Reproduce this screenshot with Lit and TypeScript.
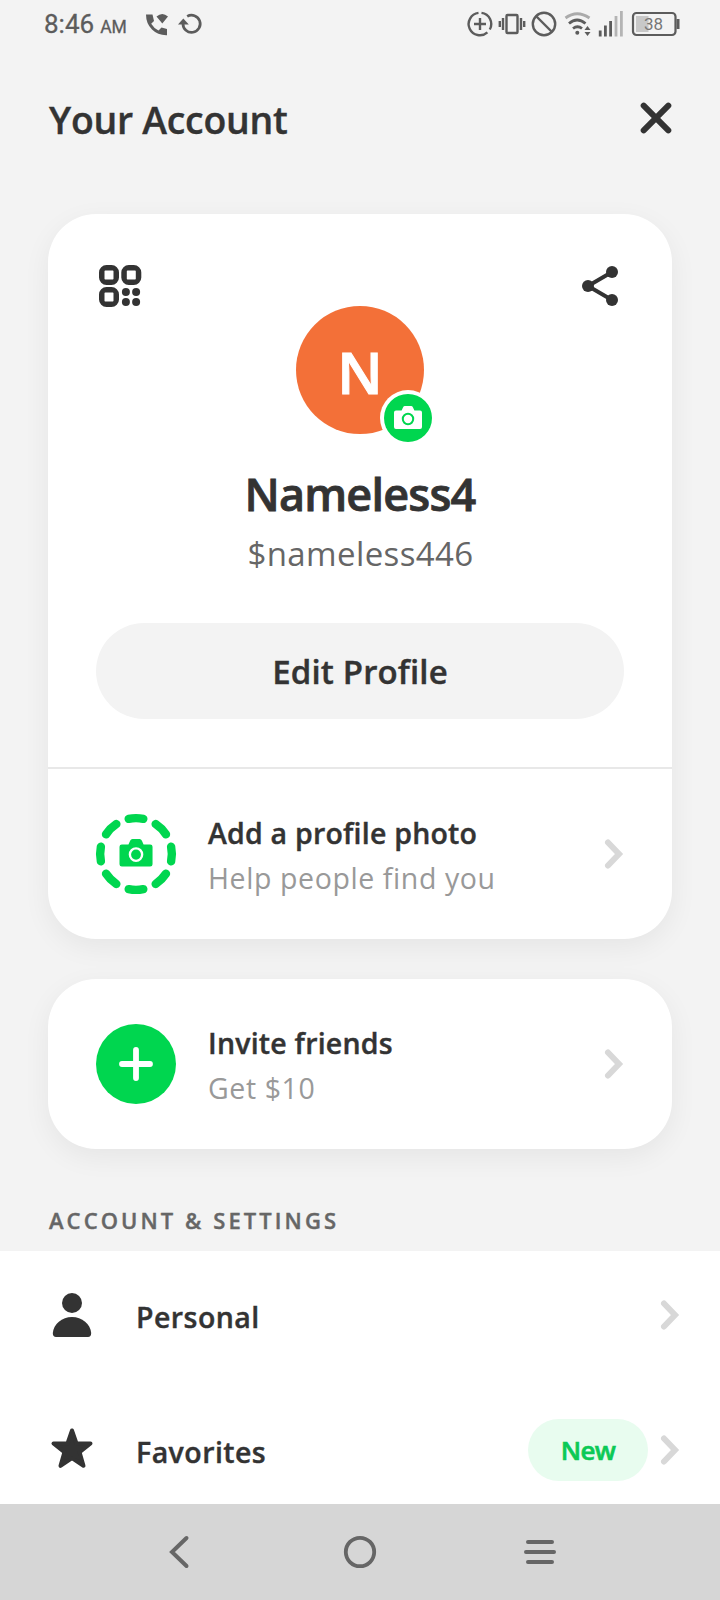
import { LitElement, html, css, svg } from "lit";
import { customElement } from "lit/decorators.js";

const chevron = html`<svg class="chev" width="24" height="34" viewBox="0 0 24 34">
  <path d="M3 5.5 14 17 3 28.5" fill="none" stroke="#d8d8d8" stroke-width="6" stroke-linecap="round" stroke-linejoin="miter" />
</svg>`;

const cameraShape = (body: string, lens: string) => svg`
  <path fill=${body} d="M2 4.5H7.6L9 1.4Q9.6 0 11 0H17Q18.4 0 19 1.4L20.4 4.5H26Q28 4.5 28 6.5V21Q28 23 26 23H2Q0 23 0 21V6.5Q0 4.5 2 4.5Z" />
  <circle cx="14" cy="13" r="5.2" fill="none" stroke=${lens} stroke-width="2" />`;

const qrCell = (x: number, y: number) => svg`
  <path fill-rule="evenodd" d="M${x + 7.5} ${y}h5a7.5 7.5 0 0 1 7.5 7.5v5a7.5 7.5 0 0 1 -7.5 7.5h-5a7.5 7.5 0 0 1 -7.5 -7.5v-5a7.5 7.5 0 0 1 7.5 -7.5ZM${x + 6.2} ${y + 5.5}q-0.7 0 -0.7 0.7v7.6q0 0.7 0.7 0.7h7.6q0.7 0 0.7 -0.7v-7.6q0 -0.7 -0.7 -0.7Z" />`;

@customElement("app-root")
export class AppRoot extends LitElement {
  static styles = css`
    :host {
      display: flex;
      flex-direction: column;
      width: 720px;
      height: 1600px;
      overflow: hidden;
      background: #f3f3f3;
      color: #333;
      font-family: "Open Sans", "Noto Sans", sans-serif;
      font-weight: 600;
    }
    * { box-sizing: border-box; }
    svg { display: block; flex: none; overflow: visible; }
    .title, .name, .edit, .copy, .label, .new, .section { -webkit-text-stroke: 0.4px currentColor; }
    .status {
      height: 48px;
      flex: none;
      display: flex;
      align-items: center;
      padding: 0 36px 0 44px;
      font-family: Roboto, sans-serif;
      font-weight: 400;
      color: #5c5c5c;
    }
    .time { font-size: 26px; line-height: 48px; width: 100px; padding-top: 3px; white-space: nowrap; -webkit-text-stroke: 0.3px currentColor; }
    .ampm { font-size: 17.5px; margin-left: 6px; }
    .right { margin-left: auto; }
    .battery { font: 17px Roboto, sans-serif; fill: #777; }
    .header {
      height: 60px;
      flex: none;
      margin-top: 40px;
      padding: 0 48px 0 49px;
      display: flex;
      justify-content: space-between;
      align-items: center;
    }
    .title { margin: 0; padding-top: 3px; font-size: 37.4px; line-height: 60px; font-weight: 600; letter-spacing: -0.25px; }
    .card {
      flex: none;
      margin: 0 48px;
      background: #fff;
      border-radius: 48px;
      box-shadow: 0 8px 28px rgba(0, 0, 0, 0.06);
    }
    .profile { margin-top: 66px; }
    .invite { margin-top: 40px; }
    .top {
      height: 553px;
      padding: 48px 48px 0;
      display: flex;
      flex-direction: column;
      align-items: center;
    }
    .tools { height: 44px; align-self: stretch; display: flex; justify-content: space-between; }
    .avatar {
      position: relative;
      width: 128px;
      height: 128px;
      flex: none;
      border-radius: 50%;
      background: #f37038;
      color: #fff;
      text-align: center;
      font-size: 58px;
      line-height: 131px;
      font-weight: 600;
      -webkit-text-stroke: 1px currentColor;
    }
    .badge { position: absolute; left: 84px; top: 84px; }
    .name { margin-top: 30px; font-size: 45px; line-height: 60px; letter-spacing: -0.81px; -webkit-text-stroke-width: 0.8px; }
    .tag { margin-top: 8px; padding-left: 1px; font-size: 33px; line-height: 44px; font-weight: 400; letter-spacing: 0.4px; color: #666; }
    .edit {
      margin-top: 47px;
      height: 96px;
      align-self: stretch;
      border: 0;
      border-radius: 48px;
      background: #f3f3f3;
      color: #333;
      font: 600 33px/94px "Open Sans", sans-serif;
      letter-spacing: 0.15px;
      padding: 2px 0 0;
    }
    .row { height: 170px; display: flex; align-items: center; padding: 0 43px 0 48px; }
    .divided { height: 172px; border-top: 2px solid #e8e8e8; }
    .copy { flex: 1; margin-left: 32px; padding-top: 3px; font-size: 28.5px; line-height: 45px; letter-spacing: 0.22px; }
    .sub { font-weight: 400; color: #999; letter-spacing: 0.6px; -webkit-text-stroke-width: 0; }
    .section { margin: 56px 0 0 49px; height: 46px; flex: none; font-size: 22px; line-height: 30px; letter-spacing: 3.08px; color: #666; }
    .list { height: 253px; flex: none; overflow: hidden; background: #fff; display: flex; flex-direction: column; gap: 5px; }
    .item { height: 130px; flex: none; display: flex; align-items: center; padding: 0 35px 0 48px; }
    .item .chev { margin-bottom: 2px; }
    .label { flex: 1; margin-left: 40px; padding-top: 1px; font-size: 28.5px; line-height: 40px; letter-spacing: 0.45px; }
    .new {
      width: 120px;
      height: 62px;
      margin: 0 13px 3px 0;
      border-radius: 31px;
      background: #e8fcef;
      color: #0cc956;
      text-align: center;
      font-size: 26px;
      line-height: 63px;
      letter-spacing: -0.6px;
      -webkit-text-stroke-width: 0.6px;
    }
    .nav { height: 96px; flex: none; background: #d6d6d6; display: flex; justify-content: center; gap: 132px; padding-top: 24px; }
  `;

  render() {
    return html`
      <div class="status">
        <div class="time">8:46<span class="ampm">AM</span></div>
        <svg width="60" height="48" viewBox="144 0 60 48">
          <path fill="#5c5c5c" d="M146 14.5H152.5L154 21 151.2 23.8Q154 28.5 158.5 30.5L161.5 27.6 167 29V35.2Q158 35.5 152 29.5 146 23.5 146 14.5ZM156.5 16.5Q162.3 11.5 168 16.5L162.3 23.5Z" />
          <path fill="none" stroke="#5c5c5c" stroke-width="2.7" d="M183 23.5A8.6 8.6 0 1 0 187.2 16.4" />
          <path fill="#5c5c5c" d="M178 24.5 183.3 18.5 188.8 24.5Z" />
        </svg>
        <svg class="right" width="234" height="48" viewBox="450 0 234 48">
          <g fill="none" stroke="#5c5c5c" stroke-width="2.4">
            <path d="M481.5 12.9A11.2 11.2 0 0 1 489.8 29.5M487.4 32.3A11.2 11.2 0 1 1 478.5 12.9" />
            <path d="M480 18V30M474 24H486" />
            <rect x="506.5" y="15" width="11" height="18" rx="1" />
            <path d="M503 18V30M499.8 21V27M521 18V30M524.2 21V27" />
            <circle cx="544" cy="24" r="11.2" />
            <path d="M536 16 552 32" />
            <path stroke="#aaa" stroke-width="2.8" d="M565.5 18Q577 9.5 589.5 18" />
            <path stroke-width="2.8" d="M569 23.5Q577 16.5 585.5 23.5M573 28.5Q577.5 25 582 28.5" />
          </g>
          <circle cx="577.3" cy="32.8" r="2" fill="#5c5c5c" />
          <path fill="#5c5c5c" d="M584.5 30 587.5 26 590.5 30ZM584.5 32 587.5 36 590.5 32Z" />
          <path stroke="#5c5c5c" stroke-width="2.8" d="M600.2 30.5V36.5M605.4 25.5V36.5M610.6 21V36.5" />
          <path stroke="#b4b4b4" stroke-width="2.8" d="M616 16V36.5M621.4 11V36.5" />
          <rect x="636" y="16" width="12.5" height="16" fill="#c8c8c8" />
          <rect x="633" y="13" width="42.5" height="22" rx="3.5" fill="none" stroke="#5c5c5c" stroke-width="2.2" />
          <rect x="676.5" y="19" width="3" height="10" fill="#5c5c5c" />
          <text class="battery" x="653.5" y="30" text-anchor="middle">38</text>
        </svg>
      </div>

      <div class="header">
        <h1 class="title">Your Account</h1>
        <svg width="32" height="32" viewBox="0 0 32 32">
          <path d="M3.7 3.7 28.3 28.3M28.3 3.7 3.7 28.3" stroke="#333" stroke-width="6" stroke-linecap="round" />
        </svg>
      </div>

      <div class="card profile">
        <div class="top">
          <div class="tools">
            <svg width="48" height="44" viewBox="96 262 48 44" fill="#333">
              ${qrCell(99, 265)}${qrCell(121.3, 265)}${qrCell(99, 287)}
              <circle cx="125.9" cy="292" r="4" /><circle cx="136.1" cy="292" r="4" />
              <circle cx="125.9" cy="302" r="4" /><circle cx="136.1" cy="302" r="4" />
            </svg>
            <svg width="48" height="44" viewBox="576 262 48 44">
              <path d="M612 272 588 286 612 300" fill="none" stroke="#333" stroke-width="4" />
              <g fill="#333"><circle cx="612" cy="272" r="6" /><circle cx="588" cy="286" r="6" /><circle cx="612" cy="300" r="6" /></g>
            </svg>
          </div>
          <div class="avatar">
            N
            <svg class="badge" width="56" height="56" viewBox="0 0 56 56">
              <circle cx="28" cy="28" r="28" fill="#fff" />
              <circle cx="28" cy="28" r="24" fill="#00d64f" />
              <g transform="translate(14 16)">${cameraShape("#fff", "#00d64f")}</g>
            </svg>
          </div>
          <div class="name">Nameless4</div>
          <div class="tag">$nameless446</div>
          <button class="edit">Edit Profile</button>
        </div>
        <div class="row divided">
          <svg width="80" height="80" viewBox="-40 -40 80 80">
            <g fill="none" stroke="#00d64f" stroke-width="8.4" stroke-linecap="round">
              ${[0, 45, 90, 135, 180, 225, 270, 315].map((a) => svg`<path transform="rotate(${a})" d="M-7.3 -35.1A35.8 35.8 0 0 1 7.3 -35.1" />`)}
            </g>
            <g transform="translate(-16.5 -15) scale(1.18 1.2)">${cameraShape("#00d64f", "#fff")}</g>
          </svg>
          <div class="copy">Add a profile photo<div class="sub">Help people find you</div></div>
          ${chevron}
        </div>
      </div>

      <div class="card invite row">
        <svg width="80" height="80" viewBox="0 0 80 80">
          <circle cx="40" cy="40" r="40" fill="#00d64f" />
          <path d="M40 26V54M26 40H54" stroke="#fff" stroke-width="5.8" stroke-linecap="round" />
        </svg>
        <div class="copy">Invite friends<div class="sub">Get $10</div></div>
        ${chevron}
      </div>

      <div class="section">ACCOUNT &amp; SETTINGS</div>
      <div class="list">
        <div class="item">
          <svg width="48" height="48" viewBox="48 1292 48 48" fill="#333">
            <circle cx="72" cy="1303" r="10" />
            <path d="M56 1337Q52.8 1337 52.8 1333C53.5 1324 62 1317 72 1317S90.5 1324 91.2 1333Q91.2 1337 88 1337Z" />
          </svg>
          <div class="label">Personal</div>
          ${chevron}
        </div>
        <div class="item">
          <svg width="48" height="48" viewBox="48 1427 48 48">
            <path fill="#333" stroke="#333" stroke-width="4" stroke-linejoin="round" d="M72 1430.5 76.5 1443.5H90.5L79.6 1452.2 83.5 1465.8 72 1458 60.500 1465.800 64.400 1452.200 53.500 1443.500H67.500Z" />
          </svg>
          <div class="label">Favorites</div>
          <div class="new">New</div>
          ${chevron}
        </div>
      </div>

      <div class="nav">
        <svg width="48" height="48" viewBox="0 0 48 48"><path d="M30.5 10 16 24 30.5 38" fill="none" stroke="#666" stroke-width="4" stroke-linecap="round" /></svg>
        <svg width="48" height="48" viewBox="0 0 48 48"><circle cx="24" cy="24" r="14.2" fill="none" stroke="#666" stroke-width="3.8" /></svg>
        <svg width="48" height="48" viewBox="0 0 48 48"><path d="M12 14H36M10 24H38M12 34H36" stroke="#666" stroke-width="4" stroke-linecap="round" /></svg>
      </div>
    `;
  }
}
